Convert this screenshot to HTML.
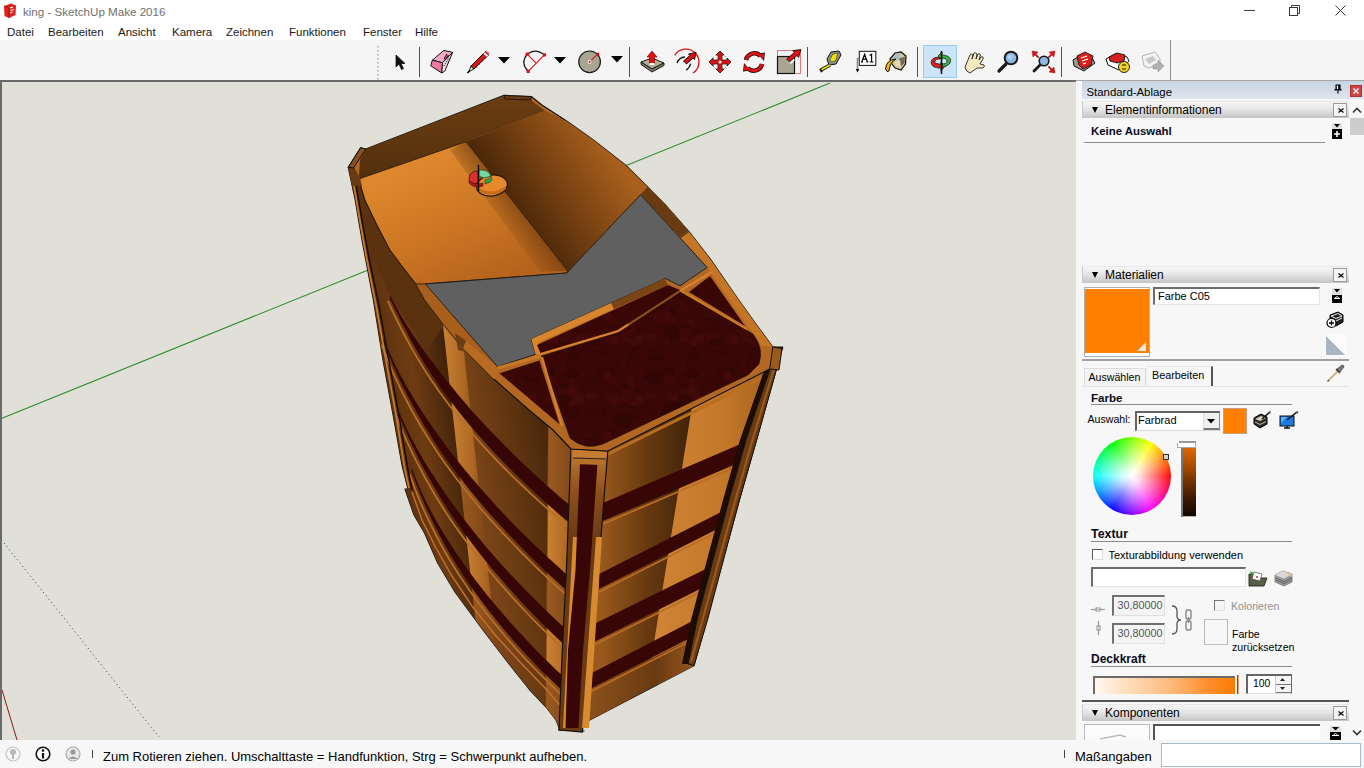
<!DOCTYPE html>
<html><head><meta charset="utf-8">
<style>
*{box-sizing:border-box;margin:0;padding:0}
html,body{width:1364px;height:768px;overflow:hidden;background:#fff;font-family:"Liberation Sans",sans-serif;color:#000}
.a{position:absolute}
.t{position:absolute;white-space:nowrap;line-height:1}
svg{position:absolute;overflow:visible}
#title{left:0;top:0;width:1364px;height:22px;background:#fff}
#menu{left:0;top:22px;width:1364px;height:18px;background:#fff}
#menu .t{top:5px;font-size:11.5px;color:#1a1a1a}
#tb{left:0;top:40px;width:1364px;height:41px;background:#f5f5f5}
#vp{left:0;top:80px;width:1076px;height:660px;background:#e0e0d9;overflow:hidden}
#panel{left:1076px;top:80px;width:288px;height:660px;background:#f7f7f7}
#status{left:0;top:740px;width:1364px;height:28px;background:#f7f7f7}
.hdr{position:absolute;left:6px;width:267px;height:17px;background:linear-gradient(#f6f6f6 0%,#e6e6e6 45%,#c4c4c4 100%);border-top:1px solid #e8e8e8;border-left:1px solid #c8c8c8}
.hdr .tri{position:absolute;left:9px;top:5px;width:0;height:0;border-left:3.5px solid transparent;border-right:3.5px solid transparent;border-top:6px solid #000}
.hdr .lbl{position:absolute;left:22px;top:2px;font-size:12px;color:#000;line-height:1;white-space:nowrap}
.hdr .x{position:absolute;left:250px;top:1px;width:14px;height:14px;border:1px solid #999;background:#f4f4f4}
.sec{position:absolute;font-weight:bold;font-size:12px;color:#0a0a1e;line-height:1;white-space:nowrap}
.ul{position:absolute;height:1px;background:#8c8c8c}
.inp{position:absolute;background:#fff;border-top:2px solid #6c6c6c;border-left:2px solid #6c6c6c;border-right:1px solid #e4e4e4;border-bottom:1px solid #e4e4e4}
.sep{position:absolute;width:1px;background:#505050}
</style></head><body>
<div id="vp" class="a">
<svg width="1076" height="660" viewBox="0 80 1076 660" style="left:0;top:0">
<defs>
<linearGradient id="gFloor" x1="440" y1="150" x2="500" y2="285" gradientUnits="userSpaceOnUse">
 <stop offset="0" stop-color="#de882e"/><stop offset="0.5" stop-color="#cc7624"/><stop offset="1" stop-color="#b4621c"/></linearGradient>
<linearGradient id="gFloorSh" x1="517" y1="206" x2="495" y2="224" gradientUnits="userSpaceOnUse">
 <stop offset="0" stop-color="#5a300c" stop-opacity="0.55"/><stop offset="1" stop-color="#5a300c" stop-opacity="0"/></linearGradient>
<linearGradient id="gRWall" x1="520" y1="210" x2="610" y2="150" gradientUnits="userSpaceOnUse">
 <stop offset="0" stop-color="#4e2a0a"/><stop offset="0.45" stop-color="#7a4212"/><stop offset="1" stop-color="#a8601c"/></linearGradient>
<linearGradient id="gBack" x1="0" y1="100" x2="0" y2="180" gradientUnits="userSpaceOnUse">
 <stop offset="0" stop-color="#6a3c12"/><stop offset="1" stop-color="#52300c"/></linearGradient>
<linearGradient id="gFA" x1="320" y1="0" x2="387.4" y2="0" gradientUnits="userSpaceOnUse" gradientTransform="skewX(9.43)">
 <stop offset="0" stop-color="#5a3010"/><stop offset="0.45" stop-color="#6e3c12"/><stop offset="1" stop-color="#40220a"/></linearGradient>
<linearGradient id="gFB" x1="387.4" y1="0" x2="487.4" y2="0" gradientUnits="userSpaceOnUse" gradientTransform="skewX(9.43)">
 <stop offset="0" stop-color="#80481a"/><stop offset="0.5" stop-color="#623610"/><stop offset="1" stop-color="#40230a"/></linearGradient>
<linearGradient id="gLP" x1="0" y1="0" x2="1" y2="0">
 <stop offset="0" stop-color="#c88032"/><stop offset="0.7" stop-color="#b06a24"/><stop offset="1" stop-color="#985820"/></linearGradient>
<linearGradient id="gLP2" x1="0" y1="0" x2="1" y2="0">
 <stop offset="0" stop-color="#9a5a22"/><stop offset="1" stop-color="#804816"/></linearGradient>
<linearGradient id="gFC" x1="546" y1="0" x2="572" y2="0" gradientUnits="userSpaceOnUse">
 <stop offset="0" stop-color="#cc8234"/><stop offset="1" stop-color="#a8621e"/></linearGradient>
<linearGradient id="gRA" x1="600" y1="0" x2="690" y2="0" gradientUnits="userSpaceOnUse">
 <stop offset="0" stop-color="#9a5a1e"/><stop offset="0.5" stop-color="#6a3a10"/><stop offset="1" stop-color="#42240a"/></linearGradient>
<linearGradient id="gRA2" x1="590" y1="0" x2="700" y2="0" gradientUnits="userSpaceOnUse"><stop offset="0" stop-color="#8a501a"/><stop offset="0.6" stop-color="#6a3a12"/><stop offset="1" stop-color="#9a5a1e"/></linearGradient>
<linearGradient id="gRB" x1="650" y1="0" x2="770" y2="0" gradientUnits="userSpaceOnUse">
 <stop offset="0" stop-color="#d08636"/><stop offset="0.6" stop-color="#c4782a"/><stop offset="1" stop-color="#a8621e"/></linearGradient>
<linearGradient id="gPost" x1="0" y1="450" x2="0" y2="540" gradientUnits="userSpaceOnUse"><stop offset="0" stop-color="#c07830"/><stop offset="0.5" stop-color="#8a4e1a"/><stop offset="1" stop-color="#6a3a12"/></linearGradient>
<pattern id="mar2" width="120" height="120" patternUnits="userSpaceOnUse"><ellipse cx="54" cy="67" rx="12" ry="6" fill="#2a0404" opacity="0.45"/><ellipse cx="22" cy="61" rx="10" ry="8" fill="#2a0404" opacity="0.45"/><ellipse cx="54" cy="17" rx="10" ry="8" fill="#2a0404" opacity="0.45"/><ellipse cx="71" cy="48" rx="9" ry="8" fill="#2a0404" opacity="0.45"/><ellipse cx="75" cy="100" rx="6" ry="4" fill="#2a0404" opacity="0.45"/><ellipse cx="72" cy="93" rx="8" ry="7" fill="#2a0404" opacity="0.45"/><ellipse cx="62" cy="77" rx="9" ry="7" fill="#480c0c" opacity="0.45"/><ellipse cx="79" cy="49" rx="10" ry="9" fill="#2a0404" opacity="0.45"/><ellipse cx="85" cy="38" rx="8" ry="5" fill="#2a0404" opacity="0.45"/><ellipse cx="68" cy="13" rx="7" ry="5" fill="#2a0404" opacity="0.45"/><ellipse cx="115" cy="102" rx="6" ry="5" fill="#2a0404" opacity="0.45"/><ellipse cx="56" cy="118" rx="9" ry="4" fill="#2a0404" opacity="0.45"/><ellipse cx="93" cy="32" rx="7" ry="6" fill="#480c0c" opacity="0.45"/><ellipse cx="91" cy="14" rx="8" ry="5" fill="#2a0404" opacity="0.45"/></pattern>
<pattern id="mar" width="60" height="60" patternUnits="userSpaceOnUse"><rect width="60" height="60" fill="#3a0707"/><rect x="19" y="9" width="9" height="3" fill="#420909" opacity="0.7"/><rect x="22" y="3" width="8" height="3" fill="#330606" opacity="0.7"/><rect x="25" y="14" width="8" height="3" fill="#420909" opacity="0.7"/><rect x="57" y="38" width="9" height="3" fill="#330606" opacity="0.7"/><rect x="3" y="13" width="8" height="4" fill="#330606" opacity="0.7"/><rect x="9" y="7" width="6" height="8" fill="#300505" opacity="0.7"/><rect x="6" y="34" width="6" height="4" fill="#420909" opacity="0.7"/><rect x="34" y="37" width="8" height="6" fill="#450a0a" opacity="0.7"/><rect x="28" y="55" width="7" height="4" fill="#300505" opacity="0.7"/><rect x="42" y="15" width="9" height="6" fill="#450a0a" opacity="0.7"/><rect x="44" y="17" width="12" height="4" fill="#330606" opacity="0.7"/><rect x="10" y="21" width="11" height="6" fill="#420909" opacity="0.7"/><rect x="46" y="34" width="11" height="5" fill="#450a0a" opacity="0.7"/><rect x="36" y="35" width="8" height="8" fill="#450a0a" opacity="0.7"/><rect x="28" y="40" width="4" height="7" fill="#330606" opacity="0.7"/><rect x="17" y="23" width="9" height="3" fill="#330606" opacity="0.7"/><rect x="21" y="37" width="8" height="4" fill="#450a0a" opacity="0.7"/><rect x="8" y="15" width="7" height="8" fill="#420909" opacity="0.7"/><rect x="10" y="24" width="6" height="4" fill="#330606" opacity="0.7"/><rect x="52" y="17" width="7" height="5" fill="#330606" opacity="0.7"/><rect x="57" y="9" width="5" height="4" fill="#300505" opacity="0.7"/><rect x="1" y="50" width="5" height="5" fill="#300505" opacity="0.7"/><rect x="25" y="22" width="9" height="9" fill="#420909" opacity="0.7"/><rect x="27" y="52" width="12" height="7" fill="#330606" opacity="0.7"/><rect x="24" y="24" width="8" height="5" fill="#300505" opacity="0.7"/><rect x="4" y="13" width="5" height="5" fill="#420909" opacity="0.7"/><rect x="6" y="34" width="8" height="9" fill="#420909" opacity="0.7"/><rect x="4" y="12" width="7" height="7" fill="#450a0a" opacity="0.7"/><rect x="36" y="28" width="5" height="6" fill="#330606" opacity="0.7"/><rect x="29" y="19" width="5" height="7" fill="#450a0a" opacity="0.7"/><rect x="29" y="42" width="8" height="4" fill="#450a0a" opacity="0.7"/><rect x="9" y="33" width="4" height="6" fill="#420909" opacity="0.7"/><rect x="42" y="16" width="7" height="4" fill="#300505" opacity="0.7"/><rect x="32" y="47" width="7" height="4" fill="#300505" opacity="0.7"/><rect x="48" y="49" width="10" height="4" fill="#330606" opacity="0.7"/><rect x="21" y="2" width="4" height="5" fill="#450a0a" opacity="0.7"/><rect x="12" y="36" width="7" height="8" fill="#450a0a" opacity="0.7"/><rect x="57" y="22" width="6" height="4" fill="#300505" opacity="0.7"/><rect x="20" y="29" width="12" height="7" fill="#420909" opacity="0.7"/><rect x="29" y="39" width="10" height="4" fill="#420909" opacity="0.7"/></pattern>
</defs>
<path d="M2 418.3 L830 83" stroke="#2e8a2e" stroke-width="1.1"/>
<path d="M2 690 L17 740" stroke="#8a1818" stroke-width="1"/>
<path d="M4 543 L159 737" stroke="#333" stroke-width="1" stroke-dasharray="1 3.2"/>
<polygon points="348.3,167.3 355.2,200.0 362.0,240.0 373.4,300.0 383.0,360.0 394.0,420.0 402.0,465.0 408.0,489.0 405.0,489.0 414.0,515.0 424.6,533.0 437.7,563.0 455.0,592.0 483.0,630.0 506.0,660.0 529.0,689.0 546.0,707.0 556.0,720.0 560.0,730.0 584.0,731.0 559.0,730.0 562.3,650.0 566.4,570.0 571.0,449.0 571.0,449.0 553.0,430.0 529.0,410.0 493.8,379.0 463.0,348.0 444.0,325.0 425.0,300.0 416.0,284.0 405.0,270.0 390.0,250.0 377.0,225.0 365.0,200.0 358.7,179.0" fill="#6a3a10" stroke="#111" stroke-width="1.2" stroke-linejoin="round"/>
<clipPath id="cLF"><polygon points="348.3,167.3 355.2,200.0 362.0,240.0 373.4,300.0 383.0,360.0 394.0,420.0 402.0,465.0 408.0,489.0 405.0,489.0 414.0,515.0 424.6,533.0 437.7,563.0 455.0,592.0 483.0,630.0 506.0,660.0 529.0,689.0 546.0,707.0 556.0,720.0 560.0,730.0 584.0,731.0 559.0,730.0 562.3,650.0 566.4,570.0 571.0,449.0 571.0,449.0 553.0,430.0 529.0,410.0 493.8,379.0 463.0,348.0 444.0,325.0 425.0,300.0 416.0,284.0 405.0,270.0 390.0,250.0 377.0,225.0 365.0,200.0 358.7,179.0"/></clipPath>
<g clip-path="url(#cLF)">
<polygon points="340.0,160.0 423.7,160.0 443.7,331.0 497.0,660.0 497.0,740.0 340.0,740.0" fill="url(#gFA)" />
<polygon points="443.7,331.0 443.7,150.0 548.0,150.0 548.0,438.0 545.4,725.0 545.4,740.0 497.0,660.0" fill="url(#gFB)" />
<polygon points="548.0,438.0 548.0,150.0 600.0,150.0 600.0,740.0 545.4,740.0 545.4,725.0" fill="#8a4e18" />
<polygon points="356.0,180.0 358.7,179.0 365.0,200.0 377.0,225.0 388.5,250.0 403.0,270.0 416.0,284.0 425.0,300.0 444.0,325.0 427.0,350.0 404.8,319.0 388.7,294.0 375.0,262.0 362.0,225.0" fill="#5a3210" />
<polygon points="442.9,323.5 463.6,348.6 471.3,418.5 450.5,393.2" fill="url(#gLP)" />
<polygon points="450.5,393.2 471.3,418.5 479.7,494.7 458.9,469.3" fill="url(#gLP)" />
<polygon points="458.9,469.3 479.7,494.7 486.2,554.3 465.3,527.8" fill="url(#gLP2)" />
<polygon points="465.3,527.8 486.2,554.3 492.2,608.1 471.1,580.5" fill="url(#gLP)" />
<polygon points="471.1,580.5 492.2,608.1 496.5,647.6 475.4,619.7" fill="url(#gLP2)" />
<polygon points="549.0,426.7 572.8,450.9 572.1,516.3 548.3,495.8" fill="url(#gLP2)" />
<polygon points="548.3,495.8 572.1,516.3 571.4,586.7 547.6,565.1" fill="url(#gFC)" />
<polygon points="547.6,565.1 571.4,586.7 570.8,642.4 547.1,619.8" fill="url(#gLP2)" />
<polygon points="547.1,619.8 570.8,642.4 570.3,691.0 546.6,668.0" fill="url(#gFC)" />
<polygon points="546.6,668.0 570.3,691.0 569.7,754.2 546.2,707.2" fill="url(#gLP2)" />
<polyline points="387.8,301.0 389.2,303.9 391.0,307.9 393.2,312.6 395.7,317.6 398.1,322.6 400.5,327.3 402.8,331.8 405.2,336.2 407.6,340.7 410.0,345.2 412.5,349.6 415.1,354.1 417.7,358.6 420.4,363.0 423.1,367.4 425.9,371.9 428.8,376.3 431.7,380.8 434.7,385.1 437.7,389.4 440.8,393.7 443.9,398.0 447.1,402.3 450.4,406.6 453.7,410.8 457.0,415.0 460.4,419.2 463.9,423.5 467.4,427.7 471.0,431.9 474.6,436.1 478.3,440.3 482.1,444.6 485.9,448.8 489.8,453.0 493.7,457.2 497.7,461.3 501.7,465.4 505.8,469.5 509.9,473.7 514.1,477.8 518.4,481.9 522.7,486.0 527.1,490.2 531.5,494.3 536.0,498.4 540.5,502.6 545.1,506.7 550.1,511.1 555.6,515.9 561.1,520.7 566.3,525.1 570.7,528.8 573.8,531.5" fill="none" stroke="#b86e26" stroke-width="1.8" />
<polyline points="381.4,344.5 382.7,347.7 384.4,352.0 386.4,357.0 388.7,362.5 391.0,367.9 393.2,373.0 395.4,377.8 397.6,382.7 400.0,387.5 402.3,392.3 404.8,397.2 407.3,402.0 409.9,406.8 412.5,411.7 415.2,416.5 418.0,421.3 420.8,426.2 423.7,431.0 426.7,435.8 429.7,440.5 432.8,445.2 435.9,450.0 439.1,454.8 442.4,459.5 445.7,464.2 449.1,468.8 452.6,473.5 456.1,478.2 459.7,482.8 463.4,487.5 467.1,492.2 470.9,496.8 474.8,501.5 478.7,506.2 482.7,510.8 486.7,515.5 490.8,520.1 495.0,524.7 499.2,529.2 503.5,533.8 507.9,538.4 512.3,543.0 516.8,547.7 521.3,552.3 526.0,557.0 530.7,561.7 535.4,566.3 540.2,571.0 545.4,575.9 551.2,581.2 557.0,586.5 562.4,591.4 567.0,595.5 570.3,598.5" fill="none" stroke="#b86e26" stroke-width="1.8" />
<polyline points="396.3,416.5 397.5,419.4 399.2,423.4 401.1,428.1 403.3,433.2 405.5,438.2 407.6,442.9 409.7,447.4 411.8,451.8 414.0,456.3 416.2,460.8 418.5,465.2 420.8,469.7 423.2,474.2 425.6,478.7 428.1,483.1 430.7,487.6 433.3,492.1 435.9,496.6 438.6,501.0 441.4,505.4 444.2,509.8 447.0,514.2 449.9,518.6 452.9,523.0 455.9,527.3 459.0,531.6 462.1,535.9 465.3,540.2 468.5,544.5 471.8,548.8 475.1,553.1 478.5,557.4 482.0,561.7 485.4,566.1 489.0,570.4 492.6,574.7 496.3,579.0 500.0,583.3 503.8,587.7 507.6,592.0 511.5,596.3 515.4,600.6 519.4,604.9 523.4,609.2 527.5,613.5 531.6,617.8 535.8,622.1 540.0,626.4 544.6,630.9 549.7,635.8 554.8,640.7 559.6,645.2 563.7,649.0 566.6,651.8" fill="none" stroke="#b86e26" stroke-width="1.8" />
<polyline points="409.8,474.5 410.8,477.3 412.2,481.1 413.8,485.5 415.6,490.3 417.5,495.1 419.3,499.6 421.1,503.8 422.9,508.0 424.8,512.2 426.8,516.3 428.8,520.5 430.8,524.7 432.9,529.0 435.0,533.2 437.2,537.5 439.5,541.8 441.7,546.0 444.1,550.3 446.5,554.5 449.0,558.7 451.5,562.8 454.1,567.0 456.7,571.2 459.4,575.4 462.1,579.5 464.9,583.6 467.7,587.8 470.6,591.9 473.5,596.0 476.5,600.1 479.5,604.2 482.7,608.3 485.8,612.4 489.0,616.5 492.3,620.6 495.6,624.7 499.0,628.8 502.4,632.9 505.8,637.0 509.3,641.1 512.9,645.2 516.5,649.3 520.2,653.3 523.9,657.3 527.7,661.3 531.6,665.4 535.5,669.4 539.4,673.4 543.7,677.7 548.4,682.3 553.2,687.0 557.7,691.3 561.5,694.9 564.2,697.5" fill="none" stroke="#b86e26" stroke-width="1.8" />
<polygon points="389.8,295.0 391.2,297.4 393.0,300.9 395.2,305.1 397.7,309.6 400.1,314.1 402.5,318.3 404.8,322.1 407.2,325.9 409.6,329.7 412.0,333.5 414.5,337.3 417.1,341.1 419.7,344.9 422.4,348.7 425.1,352.4 427.9,356.2 430.8,360.0 433.7,363.8 436.7,367.8 439.7,371.7 442.8,375.7 445.9,379.7 449.1,383.6 452.4,387.6 455.7,391.7 459.0,395.7 462.4,399.8 465.9,403.8 469.4,407.9 473.0,411.9 476.6,416.0 480.3,420.0 484.1,424.1 487.9,428.1 491.8,432.2 495.7,436.2 499.7,440.3 503.7,444.4 507.8,448.5 511.9,452.7 516.1,456.8 520.4,460.9 524.7,465.0 529.1,469.2 533.5,473.3 538.0,477.4 542.5,481.6 547.1,485.7 552.1,490.1 557.6,494.9 563.1,499.7 568.3,504.1 572.7,507.8 575.8,510.5 575.8,528.5 572.7,525.8 568.3,522.1 563.1,517.7 557.6,512.9 552.1,508.1 547.1,503.7 542.5,499.6 538.0,495.4 533.5,491.3 529.1,487.2 524.7,483.0 520.4,478.9 516.1,474.8 511.9,470.7 507.8,466.5 503.7,462.4 499.7,458.3 495.7,454.2 491.8,450.0 487.9,445.8 484.1,441.6 480.3,437.3 476.6,433.1 473.0,428.9 469.4,424.7 465.9,420.5 462.4,416.2 459.0,412.0 455.7,407.8 452.4,403.6 449.1,399.3 445.9,395.0 442.8,390.7 439.7,386.4 436.7,382.1 433.7,377.8 430.8,373.3 427.9,368.9 425.1,364.4 422.4,360.0 419.7,355.6 417.1,351.1 414.5,346.6 412.0,342.2 409.6,337.7 407.2,333.2 404.8,328.8 402.5,324.3 400.1,319.6 397.7,314.6 395.2,309.6 393.0,304.9 391.2,300.9 389.8,298.0" fill="#360606" />
<polygon points="383.4,338.5 384.7,341.3 386.4,345.3 388.4,350.0 390.7,355.1 393.0,360.3 395.2,365.0 397.4,369.3 399.6,373.7 402.0,378.0 404.3,382.3 406.8,386.7 409.3,391.0 411.9,395.3 414.5,399.7 417.2,404.0 420.0,408.3 422.8,412.7 425.7,417.0 428.7,421.4 431.7,425.8 434.8,430.2 437.9,434.7 441.1,439.1 444.4,443.5 447.7,448.0 451.1,452.5 454.6,457.0 458.1,461.5 461.7,466.0 465.4,470.5 469.1,475.0 472.9,479.5 476.8,484.0 480.7,488.5 484.7,493.0 488.7,497.5 492.8,502.1 497.0,506.7 501.2,511.2 505.5,515.8 509.9,520.4 514.3,525.0 518.8,529.5 523.3,534.0 528.0,538.5 532.7,543.0 537.4,547.5 542.2,552.0 547.4,556.9 553.2,562.2 559.0,567.5 564.4,572.4 569.0,576.5 572.3,579.5 572.3,595.5 569.0,592.5 564.4,588.4 559.0,583.5 553.2,578.2 547.4,572.9 542.2,568.0 537.4,563.3 532.7,558.7 528.0,554.0 523.3,549.3 518.8,544.7 514.3,540.0 509.9,535.4 505.5,530.8 501.2,526.2 497.0,521.7 492.8,517.1 488.7,512.5 484.7,507.8 480.7,503.2 476.8,498.5 472.9,493.8 469.1,489.2 465.4,484.5 461.7,479.8 458.1,475.2 454.6,470.5 451.1,465.8 447.7,461.2 444.4,456.5 441.1,451.8 437.9,447.0 434.8,442.2 431.7,437.5 428.7,432.8 425.7,428.0 422.8,423.2 420.0,418.3 417.2,413.5 414.5,408.7 411.9,403.8 409.3,399.0 406.8,394.2 404.3,389.3 402.0,384.5 399.6,379.7 397.4,374.8 395.2,370.0 393.0,364.9 390.7,359.5 388.4,354.0 386.4,349.0 384.7,344.7 383.4,341.5" fill="#360606" />
<polygon points="398.3,410.5 399.5,413.1 401.2,416.8 403.1,421.1 405.3,425.8 407.5,430.5 409.6,434.9 411.7,438.9 413.8,442.8 416.0,446.8 418.2,450.8 420.5,454.7 422.8,458.7 425.2,462.7 427.6,466.7 430.1,470.6 432.7,474.6 435.3,478.6 437.9,482.6 440.6,486.7 443.4,490.7 446.2,494.8 449.0,498.9 451.9,502.9 454.9,507.0 457.9,511.1 461.0,515.3 464.1,519.4 467.3,523.5 470.5,527.7 473.8,531.8 477.1,535.9 480.5,540.1 484.0,544.2 487.4,548.4 491.0,552.5 494.6,556.7 498.3,560.9 502.0,565.0 505.8,569.2 509.6,573.3 513.5,577.5 517.4,581.6 521.4,585.7 525.4,589.9 529.5,594.0 533.6,598.1 537.8,602.3 542.0,606.4 546.6,610.9 551.7,615.8 556.8,620.7 561.6,625.2 565.7,629.0 568.6,631.8 568.6,648.8 565.7,646.0 561.6,642.2 556.8,637.7 551.7,632.8 546.6,627.9 542.0,623.4 537.8,619.1 533.6,614.8 529.5,610.5 525.4,606.2 521.4,601.9 517.4,597.6 513.5,593.3 509.6,589.0 505.8,584.7 502.0,580.3 498.3,576.0 494.6,571.7 491.0,567.4 487.4,563.1 484.0,558.7 480.5,554.4 477.1,550.1 473.8,545.8 470.5,541.5 467.3,537.2 464.1,532.9 461.0,528.6 457.9,524.3 454.9,520.0 451.9,515.6 449.0,511.2 446.2,506.8 443.4,502.4 440.6,498.0 437.9,493.6 435.3,489.1 432.7,484.6 430.1,480.1 427.6,475.7 425.2,471.2 422.8,466.7 420.5,462.2 418.2,457.8 416.0,453.3 413.8,448.8 411.7,444.4 409.6,439.9 407.5,435.2 405.3,430.2 403.1,425.1 401.2,420.4 399.5,416.4 398.3,413.5" fill="#360606" />
<polygon points="411.8,468.5 412.8,471.0 414.2,474.4 415.8,478.5 417.6,483.0 419.5,487.5 421.3,491.6 423.1,495.4 424.9,499.3 426.8,503.2 428.8,507.0 430.8,510.9 432.8,514.7 434.9,518.5 437.0,522.2 439.2,526.0 441.5,529.8 443.7,533.5 446.1,537.3 448.5,541.1 451.0,545.0 453.5,548.8 456.1,552.7 458.7,556.5 461.4,560.4 464.1,564.3 466.9,568.3 469.7,572.2 472.6,576.2 475.5,580.2 478.5,584.1 481.5,588.0 484.7,592.0 487.8,595.9 491.0,599.8 494.3,603.8 497.6,607.7 501.0,611.6 504.4,615.6 507.8,619.5 511.3,623.4 514.9,627.4 518.5,631.3 522.2,635.3 525.9,639.3 529.7,643.3 533.6,647.4 537.5,651.4 541.4,655.4 545.7,659.7 550.4,664.3 555.2,669.0 559.7,673.3 563.5,676.9 566.2,679.5 566.2,694.5 563.5,691.9 559.7,688.3 555.2,684.0 550.4,679.3 545.7,674.7 541.4,670.4 537.5,666.4 533.6,662.4 529.7,658.3 525.9,654.3 522.2,650.3 518.5,646.3 514.9,642.2 511.3,638.1 507.8,634.0 504.4,629.9 501.0,625.8 497.6,621.7 494.3,617.6 491.0,613.5 487.8,609.4 484.7,605.3 481.5,601.2 478.5,597.1 475.5,593.0 472.6,588.9 469.7,584.8 466.9,580.6 464.1,576.5 461.4,572.4 458.7,568.2 456.1,564.0 453.5,559.8 451.0,555.7 448.5,551.5 446.1,547.3 443.7,543.0 441.5,538.8 439.2,534.5 437.0,530.2 434.9,526.0 432.8,521.7 430.8,517.5 428.8,513.3 426.8,509.2 424.9,505.0 423.1,500.8 421.3,496.6 419.5,492.1 417.6,487.3 415.8,482.5 414.2,478.1 412.8,474.3 411.8,471.5" fill="#360606" />
<polyline points="353.0,180.0 359.0,215.0 366.0,255.0 376.0,305.0 385.0,355.0 396.0,415.0 405.0,470.0 409.0,488.0" fill="none" stroke="#c47a2c" stroke-width="1.8" />
<polyline points="356.0,185.0 362.0,220.0 369.0,258.0 379.0,306.0 388.0,356.0 399.0,416.0 408.0,470.0 412.0,490.0" fill="none" stroke="#140a02" stroke-width="1.4" />
<polyline points="412.0,492.0 422.0,520.0 436.0,548.0 452.0,576.0 472.0,606.0 496.0,636.0 520.0,662.0 545.0,688.0 566.0,712.0" fill="none" stroke="#c07028" stroke-width="1.5" />
</g>
<clipPath id="cRF"><polygon points="600.0,446.0 769.7,362.0 782.7,347.0 739.4,500.0 694.0,665.6 583.0,723.4 590.0,450.0"/></clipPath>
<polygon points="600.0,446.0 769.7,362.0 782.7,347.0 739.4,500.0 694.0,665.6 583.0,723.4 590.0,450.0" fill="#6a3a10" stroke="#111" stroke-width="1.2"/>
<g clip-path="url(#cRF)">
<polygon points="590.0,440.0 693.0,400.0 648.0,680.0 590.0,740.0" fill="url(#gRA)" />
<polygon points="693.0,400.0 800.0,340.0 800.0,740.0 648.0,680.0" fill="url(#gRB)" />
<polygon points="580.0,694.0 720.0,624.0 720.0,740.0 580.0,740.0" fill="url(#gRA2)" />
<polygon points="603.0,503.0 750.0,440.0 750.0,458.0 603.0,521.0" fill="#380606" />
<polyline points="603.0,524.0 750.0,461.0" fill="none" stroke="#b86e26" stroke-width="1.8" />
<polygon points="599.0,574.0 735.0,505.0 735.0,520.0 599.0,589.0" fill="#380606" />
<polyline points="599.0,592.0 735.0,523.0" fill="none" stroke="#b86e26" stroke-width="1.8" />
<polygon points="592.0,625.0 720.0,562.0 720.0,579.0 592.0,643.0" fill="#380606" />
<polyline points="592.0,646.0 720.0,582.0" fill="none" stroke="#b86e26" stroke-width="1.8" />
<polygon points="588.0,675.0 706.0,614.0 706.0,630.0 588.0,690.0" fill="#380606" />
<polyline points="588.0,693.0 706.0,633.0" fill="none" stroke="#b86e26" stroke-width="1.8" />
<polyline points="600.0,458.0 770.0,374.0" fill="none" stroke="#b8701e" stroke-width="3" />
</g>
<polygon points="770.0,369.0 746.0,440.0 729.0,500.0 697.0,620.0 688.0,664.0 682.0,664.0 691.0,620.0 723.0,500.0 740.0,440.0 764.0,371.0" fill="#1e0c04" />
<polygon points="772.8,347.0 782.7,347.0 756.7,440.0 739.4,500.0 707.5,620.0 694.0,665.6 688.0,664.0 697.0,620.0 729.0,500.0 746.0,440.0 770.0,369.0" fill="#6a3a12" stroke="#111" stroke-width="1"/>
<polyline points="776.0,362.0 751.0,445.0 734.0,505.0 702.0,622.0 691.0,662.0" fill="none" stroke="#9a5a1c" stroke-width="2.2" />
<polygon points="571.0,449.0 607.8,451.0 598.3,570.0 589.7,650.0 582.4,732.0 559.0,730.0 562.3,650.0 566.4,570.0" fill="url(#gPost)" stroke="#111" stroke-width="1.2"/>
<polygon points="573.0,537.0 579.0,537.0 571.0,728.0 563.0,728.0" fill="#d88a30" />
<polygon points="596.0,537.0 602.0,537.0 589.0,728.0 582.0,728.0" fill="#d88a30" />
<polygon points="580.0,463.0 597.4,464.6 590.0,570.0 583.0,650.0 578.4,728.0 565.5,728.0 568.0,650.0 575.5,570.0" fill="#380606" />
<polygon points="571.5,450.0 607.0,452.0 606.0,458.0 572.5,457.5" fill="#c47c30" />
<polyline points="573.0,458.0 605.6,459.0" fill="none" stroke="#222" stroke-width="1" />
<polygon points="573.0,459.0 605.0,460.0 604.0,465.0 573.0,464.0" fill="#b87028" />
<polygon points="348.3,167.3 360.6,147.8 365.8,149.1 504.0,95.4 531.6,96.7 541.9,105.0 567.4,121.5 593.0,139.7 625.7,165.2 647.6,187.0 665.8,205.3 691.3,234.5 709.6,258.2 738.7,300.0 757.0,325.6 772.8,347.0 782.0,348.4 769.7,369.0 607.8,451.0 571.0,449.0 553.0,430.0 529.0,410.0 493.8,379.0 463.0,348.0 444.0,325.0 425.0,300.0 416.0,284.0 405.0,270.0 390.0,250.0 377.0,225.0 365.0,200.0 358.7,179.0 353.5,168.0" fill="#b26822" stroke="#111" stroke-width="1.2" stroke-linejoin="round"/>
<polygon points="358.7,179.0 360.0,160.0 365.8,149.1 504.0,95.4 531.6,96.7 532.0,101.0 545.0,110.7 466.0,141.8" fill="url(#gBack)" />
<polygon points="466.0,141.8 545.0,110.7 567.4,121.5 593.0,139.7 625.7,165.2 647.6,187.0 652.0,192.0 640.5,194.6 566.8,273.0 567.5,270.7" fill="url(#gRWall)" />
<polygon points="416.0,284.0 425.0,300.0 444.0,325.0 463.0,348.0 493.8,379.0 499.4,373.3 497.5,366.7 424.3,283.9" fill="#a85e1c" />
<polygon points="455.0,333.0 466.0,341.0 466.0,352.0 458.0,350.0" fill="#6e3c12" />
<polygon points="463.0,348.0 493.8,379.0 499.4,373.3 497.5,366.7 466.0,341.0" fill="#b86c22" />
<polygon points="358.7,179.0 466.0,141.8 567.5,270.7 566.8,273.0 424.3,283.9 416.0,284.0 405.0,270.0 390.0,250.0 377.0,225.0 365.0,200.0" fill="url(#gFloor)" stroke="#2a1606" stroke-width="0.9"/>
<polygon points="466.0,141.8 567.5,270.7 540.0,272.0 450.0,150.0" fill="url(#gFloorSh)" />
<polygon points="640.5,194.6 647.6,187.0 665.8,205.3 691.3,234.5 709.6,258.2 738.7,300.0 757.0,325.6 772.8,347.0 761.0,346.0 746.0,324.0 726.0,295.0 710.0,272.0 707.2,267.5" fill="#c47626" />
<polygon points="640.5,194.6 647.6,187.0 665.8,205.3 689.0,232.0 681.0,238.0" fill="#6a3a10" />
<polygon points="640.5,194.6 707.2,267.5 680.0,285.8 665.3,278.5 531.3,339.1 535.5,354.3 497.5,366.7 425.3,284.0 566.8,273.0" fill="#606060" stroke="#1a1a1a" stroke-width="0.9"/>
<path d="M541.3 356 L618 332.5 L628.3 326 L680.5 292 L753 334 Q 764 348 759 364 L748 375 L603 444 Q 585 451 570 438 Z" fill="url(#mar)" stroke="#1a0c04" stroke-width="0.6"/>
<path d="M541.3 356 L618 332.5 L628.3 326 L680.5 292 L753 334 Q 764 348 759 364 L748 375 L603 444 Q 585 451 570 438 Z" fill="url(#mar2)"/>
<polygon points="499.4,373.3 539.5,360.5 559.5,424.3" fill="url(#mar)" />
<polygon points="710.0,276.0 745.0,326.0 689.0,292.0" fill="url(#mar)" />
<polygon points="531.3,339.1 611.0,303.0 614.0,309.0 538.0,343.0 542.0,355.0 535.5,354.3" fill="#d8862e" />
<polygon points="611.0,303.0 664.5,278.4 668.0,285.0 614.0,309.0" fill="#7a4414" />
<polygon points="537.0,345.0 668.0,285.0 680.5,290.2 628.3,324.0 618.0,330.7 540.6,353.5" fill="url(#mar)" />
<polyline points="540.6,354.0 618.0,331.0 628.3,324.5" fill="none" stroke="#d48030" stroke-width="2.2" />
<polyline points="628.3,324.5 680.5,290.5" fill="none" stroke="#8a5018" stroke-width="2" />
<polyline points="680.5,290.5 747.0,329.0" fill="none" stroke="#c87828" stroke-width="2.2" />
<polyline points="680.5,290.5 712.0,272.0" fill="none" stroke="#d48030" stroke-width="2.4" />
<polyline points="542.0,357.0 562.0,426.0" fill="none" stroke="#d48030" stroke-width="2.2" />
<polyline points="497.5,368.0 541.0,356.0" fill="none" stroke="#c87828" stroke-width="3" />
<polygon points="348.3,167.3 353.5,166.0 360.0,178.0 362.0,186.0 352.0,186.0" fill="#6a3a12" />
<polygon points="348.3,167.3 360.6,147.8 365.8,149.1 353.5,168.0" fill="#8a5020" stroke="#111" stroke-width="1"/>
<polygon points="504.0,95.4 531.6,96.7 530.0,100.0 505.0,99.0" fill="#6a3a10" stroke="#111" stroke-width="0.8"/>
<polygon points="772.8,347.0 782.0,348.4 779.0,370.0 769.7,369.0" fill="#9a5a1a" stroke="#111" stroke-width="1"/>
<ellipse cx="492" cy="185.5" rx="15.5" ry="10.5" transform="rotate(-8 492 185.5)" fill="#e48a2c" stroke="#2a1406" stroke-width="1.3"/>
<path d="M478 189 Q 492 199 507 187" stroke="#2a1406" fill="none" stroke-width="1"/>
<path d="M479 188 Q 492 196 506 186 L 506 189 Q 492 199 479 191 Z" fill="#c86a1c"/>
<path d="M469 178 Q 470 171 478 171 L 478 183 Q 471 185 469 180 Z" fill="#d83030" stroke="#3a0a0a" stroke-width="0.7"/>
<path d="M469 180 Q 474 186 483 183 L 483 186 Q 474 189 469 183 Z" fill="#b01818" stroke="#3a0a0a" stroke-width="0.5"/>
<path d="M479 170 Q 488 169 491 176 L 484 178 L 479 176 Z" fill="#70d8a0" stroke="#0a3a1a" stroke-width="0.6"/>
<path d="M485 180 Q 490 179 491 176 L 492 180 Q 490 183 485 184 Z" fill="#30a050" stroke="#0a3a1a" stroke-width="0.5"/>
<path d="M478.5 165 V 191.5" stroke="#111" stroke-width="1.4"/>
</svg>
</div>
<div id="title" class="a">
  <svg style="left:3px;top:3px" width="14" height="16" viewBox="0 0 14 16"><path d="M1 3 L8 0.5 L13 2.5 L12.5 12 L6 15 L1.5 13 Z" fill="#e0201a"/><path d="M1 3 L6 5 L6 15" fill="none" stroke="#9a1010" stroke-width="0.8"/><path d="M7 5 L10 4 M7.5 7.5 L11 6.5 M7 10 L9.5 9" stroke="#fff" stroke-width="1.1"/></svg>
  <div class="t" style="left:23px;top:6px;font-size:11.6px;color:#707070">king - SketchUp Make 2016</div>
  <svg style="left:1244px;top:10px" width="11" height="1"><rect width="11" height="1" fill="#3a3a3a"/></svg>
  <svg style="left:1289px;top:5px" width="11" height="11" viewBox="0 0 11 11"><rect x="0.5" y="2.5" width="8" height="8" fill="none" stroke="#3a3a3a"/><path d="M2.5 2.5 V0.5 H10.5 V8.5 H8.5" fill="none" stroke="#3a3a3a"/></svg>
  <svg style="left:1335px;top:5px" width="11" height="11" viewBox="0 0 11 11"><path d="M0.5 0.5 L10.5 10.5 M10.5 0.5 L0.5 10.5" stroke="#3a3a3a" stroke-width="1"/></svg>
</div>
<div id="menu" class="a">
  <div class="t" style="left:7px">Datei</div>
  <div class="t" style="left:48px">Bearbeiten</div>
  <div class="t" style="left:118px">Ansicht</div>
  <div class="t" style="left:172px">Kamera</div>
  <div class="t" style="left:226px">Zeichnen</div>
  <div class="t" style="left:289px">Funktionen</div>
  <div class="t" style="left:363px">Fenster</div>
  <div class="t" style="left:415px">Hilfe</div>
</div>
<div id="tb" class="a">
  <!-- grip -->
  <svg style="left:377px;top:6px" width="2" height="34"><path d="M1 0 V34" stroke="#9a9a9a" stroke-width="1.2" stroke-dasharray="1.5 2.5"/></svg>
  <!-- select -->
  <svg style="left:395px;top:14px" width="11" height="17" viewBox="0 0 11 17"><path d="M1 1 L1 13 L4 10 L6.5 15.5 L8.5 14.5 L6 9.5 L10 9.5 Z" fill="#111" stroke="#111" stroke-width="0.8" stroke-linejoin="round"/></svg>
  <div class="sep" style="left:419px;top:7px;height:30px"></div>
  <!-- eraser -->
  <svg style="left:430px;top:10px" width="24" height="24" viewBox="0 0 24 24"><path d="M2.3 10.2 L13.8 0.5 L22.7 2.3 L12.5 12.8 Z" fill="#f5a8c8" stroke="#111" stroke-width="1"/><path d="M0.7 15.8 L2.3 10.2 L12.5 12.8 L11.8 23 Z" fill="#f27aa2" stroke="#111" stroke-width="1"/><path d="M12.5 12.8 L22.7 2.3 L14.8 21.1 L11.8 23 Z" fill="#fbe0ea" stroke="#111" stroke-width="1"/><path d="M14 9 L17 4 M15 10 L18.5 5" stroke="#3a1a2a" stroke-width="1.2"/><path d="M14 16 L19 8" stroke="#222" stroke-width="1.3" stroke-dasharray="1 1.2"/></svg>
  <!-- pencil -->
  <svg style="left:467px;top:10px" width="24" height="24" viewBox="0 0 24 24"><path d="M18.5 1.5 L22 4.5 L7 19 L3.8 16.2 Z" fill="#d81818" stroke="#111" stroke-width="1"/><path d="M17 3 L20.5 6.2" stroke="#fff" stroke-width="1.8"/><path d="M19.3 1.2 L22.3 4" stroke="#f08080" stroke-width="1.6"/><path d="M3.8 16.2 L7 19 L2 21.5 Z" fill="#f0e0a0" stroke="#111" stroke-width="0.9"/><path d="M0.5 23 L2.8 20.6" stroke="#000" stroke-width="1.6"/><path d="M9 17 L10 18 M12 14 L13 15 M15 11 L16 12 M18 8 L19 9" stroke="#555" stroke-width="0.6"/></svg>
  <svg style="left:498px;top:17px" width="12" height="7"><path d="M0 0 H12 L6 6.5 Z" fill="#000"/></svg>
  <!-- arc -->
  <svg style="left:522px;top:10px" width="25" height="24" viewBox="0 0 25 24"><path d="M5.2 4.2 Q 13.5 -2.5 22.4 4.9" fill="none" stroke="#111" stroke-width="1.2"/><path d="M5.2 4.2 Q -2 13 6.2 21.4" fill="none" stroke="#111" stroke-width="1.2"/><path d="M22.4 4.9 L6.2 21.4 M5.2 4.2 L13.8 12.8" stroke="#e01010" stroke-width="1.1"/><rect x="3.6" y="2.6" width="3.2" height="3.2" fill="#e01010"/><rect x="20.8" y="3.3" width="3.2" height="3.2" fill="#e01010"/><rect x="4.6" y="19.8" width="3.2" height="3.2" fill="#e01010"/></svg>
  <svg style="left:554px;top:17px" width="12" height="7"><path d="M0 0 H12 L6 6.5 Z" fill="#000"/></svg>
  <!-- circle -->
  <svg style="left:578px;top:10px" width="24" height="24" viewBox="0 0 24 24"><circle cx="11.6" cy="11.8" r="10.8" fill="#a8a690" stroke="#1a1a1a" stroke-width="1.2"/><path d="M11.6 11.8 L20 3.9" stroke="#e01010" stroke-width="1.1"/><circle cx="11.6" cy="11.8" r="2" fill="#fff"/><circle cx="11.6" cy="11.8" r="1.1" fill="#e01010"/><rect x="18.8" y="2.7" width="2.5" height="2.5" fill="#e01010"/></svg>
  <svg style="left:611px;top:16px" width="12" height="7"><path d="M0 0 H12 L6 6.5 Z" fill="#000"/></svg>
  <div class="sep" style="left:629px;top:7px;height:30px"></div>
  <!-- push pull -->
  <svg style="left:640px;top:10px" width="25" height="24" viewBox="0 0 25 24"><path d="M1 12 L12 8 L24 13 L12 19 Z" fill="#b0ae98" stroke="#1a1a1a" stroke-width="1"/><path d="M1 12 L1 14.5 L12 22 L24 15.5 L24 13 L12 19 Z" fill="#7c7a68" stroke="#1a1a1a" stroke-width="1"/><path d="M12 1 L17 7 L14.5 7 L14.5 14 L9.5 14 L9.5 7 L7 7 Z" fill="#e01010" stroke="#600" stroke-width="0.6"/><rect x="9.5" y="13" width="5" height="2" fill="#fff"/></svg>
  <!-- follow me -->
  <svg style="left:674px;top:10px" width="26" height="26" viewBox="0 0 26 26"><path d="M0.8 5.4 A 13 13 0 1 1 19 23" fill="none" stroke="#e01010" stroke-width="1.3"/><path d="M3 13 Q 5 7.5 11 7" fill="none" stroke="#111" stroke-width="1.4"/><path d="M12.3 20.3 Q 16 17 16.7 13.6" fill="none" stroke="#111" stroke-width="1.4"/><path d="M9.5 11 L16 5.5 L14.5 4 L22 2.5 L20.5 9.5 L19 8 L12.5 14 Z" fill="#e01010" stroke="#111" stroke-width="1"/></svg>
  <!-- move -->
  <svg style="left:708px;top:10px" width="24" height="24" viewBox="0 0 24 24"><path d="M12 1 L16 5 L14 5 L14 10 L19 10 L19 8 L23 12 L19 16 L19 14 L14 14 L14 19 L16 19 L12 23 L8 19 L10 19 L10 14 L5 14 L5 16 L1 12 L5 8 L5 10 L10 10 L10 5 L8 5 Z" fill="#e01010" stroke="#222" stroke-width="0.8"/><path d="M12 1 L23 12 L12 23 L1 12 Z" fill="none" stroke="#000" stroke-width="0.6" stroke-dasharray="1 1.5"/><circle cx="12" cy="12" r="1.6" fill="#fff"/></svg>
  <!-- rotate -->
  <svg style="left:742px;top:11px" width="24" height="22" viewBox="0 0 24 22"><g fill="none" stroke="#111" stroke-width="4.6"><path d="M4 9 A 8.5 8.5 0 0 1 18.5 5"/><path d="M20 13 A 8.5 8.5 0 0 1 5.5 17"/></g><path d="M15.5 2.5 L23 1.5 L22 10 Z" fill="#111"/><path d="M8.5 19.5 L1 20.5 L2 12 Z" fill="#111"/><g fill="none" stroke="#e01010" stroke-width="3"><path d="M4 9 A 8.5 8.5 0 0 1 18.5 5"/><path d="M20 13 A 8.5 8.5 0 0 1 5.5 17"/></g><path d="M16.5 3.2 L22.2 2.5 L21.4 8.8 Z" fill="#e01010"/><path d="M7.5 18.8 L1.8 19.5 L2.6 13.2 Z" fill="#e01010"/></svg>
  <!-- scale -->
  <svg style="left:776px;top:9px" width="26" height="26" viewBox="0 0 26 26"><rect x="1.5" y="1.5" width="23" height="23" fill="none" stroke="#e07070" stroke-width="0.9"/><rect x="1.5" y="7.5" width="17" height="17" fill="#a8a690" stroke="#111" stroke-width="1.2"/><path d="M11 12 L16 8 L19 11 L15 15 Z" fill="#fff"/><path d="M10.7 10.0 L18.4 3.5 L16.8 1.6 L24.9 0.6 L22.6 8.4 L21 6.5 L13.3 13.0 Z" fill="#e01010" stroke="#111" stroke-width="0.9" stroke-linejoin="round"/></svg>
  <div class="sep" style="left:807px;top:7px;height:30px"></div>
  <!-- tape -->
  <svg style="left:819px;top:10px" width="23" height="24" viewBox="0 0 23 24"><path d="M8 9 L12 2 L20 1 L22 5 L17 14 L10 15 Z" fill="#909090" stroke="#111" stroke-width="1"/><path d="M11 9 L14 4 L19 3 L16.5 11 L12 12 Z" fill="#f0e000" stroke="#333" stroke-width="0.6"/><path d="M11 15 L2 20" stroke="#111" stroke-width="3.6"/><path d="M11 15 L2 20" stroke="#f0e000" stroke-width="2"/><path d="M1 19 L3 22" stroke="#111" stroke-width="2"/></svg>
  <!-- text -->
  <svg style="left:855px;top:10px" width="23" height="24" viewBox="0 0 23 24"><rect x="4.3" y="1.3" width="16.5" height="14.1" fill="#fff" stroke="#111" stroke-width="1"/><path d="M6.8 12 L9.6 4.2 L12.4 12 M7.9 9.2 H11.3 M6 12 H8 M11.3 12 H13.3" fill="none" stroke="#000" stroke-width="1.2"/><path d="M14.6 5.6 L16.6 4.3 V12 M14.8 12 H18.4" fill="none" stroke="#000" stroke-width="1.2"/><path d="M4.3 8.5 H2.5 V19" fill="none" stroke="#8a8a8a" stroke-width="1.6"/><path d="M0.8 19 H4.2 L2.5 22.5 Z" fill="#000"/></svg>
  <!-- paint -->
  <svg style="left:884px;top:10px" width="25" height="24" viewBox="0 0 25 24"><path d="M6 9 L11 3 L17 2 L22 6 L21.5 14 L17 20 L11 18 L8 14 Z" fill="#cfc8a0" stroke="#111" stroke-width="1.2"/><path d="M8 9 L12 4 L17 3.5 L15 8.5 L10 11 Z" fill="#a8bcc4"/><path d="M15 8.5 L21 6.5 L20.5 13 L16.5 17 Z" fill="#706c5c"/><path d="M11 12 L16 10 L17 17 L12 16 Z" fill="#e4dcb0"/><path d="M1.5 19 Q 2 10 12 9 Q 6 12 5 21 Q 3 23 1.5 19 Z" fill="#f0b400" stroke="#111" stroke-width="1"/></svg>
  <div class="sep" style="left:917px;top:7px;height:30px"></div>
  <!-- orbit highlighted -->
  <div class="a" style="left:923px;top:5px;width:34px;height:33px;background:#cce4f7;border:1px solid #99c9ef"></div>
  <svg style="left:929px;top:10px" width="24" height="25" viewBox="0 0 24 25"><path d="M11 7 C 2 7 1 12 3 15 C 5 18 10 18 12 18 L12 21 L16 16 L12 12 L12 14 C 8 14 5 13 6 11 C 7 9 10 9 11 9 Z" fill="#d02020" stroke="#111" stroke-width="0.7"/><path d="M13 5 C 20 5 23 9 21 13 C 19 16 15 17 13 17 L13 14 C 16 14 18 13 18 11 C 18 9 15 8 13 8 L13 10 L9 6 L13 2 Z" fill="#38b048" stroke="#111" stroke-width="0.7"/><path d="M12.5 1 V24" stroke="#111" stroke-width="1.6"/></svg>
  <!-- hand -->
  <svg style="left:963px;top:10px" width="23" height="24" viewBox="0 0 23 24"><path d="M2 17 L7 5 Q8 3 10 5 L9 9 L11 3 Q13 2 14 4 L13 9 L15 4 Q17 3 17.5 5 L16 10 L18 7 Q20 6 20.5 8 L17 14 L21 15 Q22 17 20 18 L14 18 L7 23 Q3 22 2 17 Z" fill="#f4e8c0" stroke="#222" stroke-width="0.9"/></svg>
  <!-- zoom -->
  <svg style="left:996px;top:10px" width="24" height="24" viewBox="0 0 24 24"><path d="M3 21 L10 14" stroke="#1a1a1a" stroke-width="3.2" stroke-linecap="round"/><circle cx="15" cy="8" r="6.3" fill="#8cb8e4" stroke="#1a1a1a" stroke-width="2"/><circle cx="14" cy="7" r="2.5" fill="#b0d0f0"/></svg>
  <!-- zoom extents -->
  <svg style="left:1031px;top:10px" width="25" height="24" viewBox="0 0 25 24"><path d="M3 21 L10 14" stroke="#1a1a1a" stroke-width="2.8" stroke-linecap="round"/><circle cx="13" cy="11" r="4.8" fill="#8cb8e4" stroke="#1a1a1a" stroke-width="1.6"/><path d="M1 1 L7 2 L5 4 L8 7 L7 8 L4 5 L2 7 Z M24 1 L18 2 L20 4 L17 7 L18 8 L21 5 L23 7 Z M24 23 L18 22 L20 20 L17 17 L18 16 L21 19 L23 17 Z" fill="#e01010" stroke="#700" stroke-width="0.4"/></svg>
  <div class="sep" style="left:1061px;top:7px;height:30px"></div>
  <!-- 3d warehouse -->
  <svg style="left:1072px;top:11px" width="24" height="22" viewBox="0 0 24 22"><path d="M1 9 L9 4 L20 7 L23 12 L12 20 L2 15 Z" fill="#9a9a90" stroke="#111" stroke-width="1"/><path d="M5 5 L13 1 L21 5 L19 14 L11 18 L7 14 Z" fill="#d82020" stroke="#111" stroke-width="0.9"/><path d="M9 7 L15 5 M10 10 L16 8 M11 13 L14 12" stroke="#fff" stroke-width="1.2"/></svg>
  <!-- extension warehouse -->
  <svg style="left:1105px;top:11px" width="26" height="22" viewBox="0 0 26 22"><path d="M1 8 L10 3 L22 6 L24 10 L14 19 L3 14 Z" fill="#fff" stroke="#111" stroke-width="1"/><path d="M4 6 L12 2 L20 4 L19 10 L12 12 L5 10 Z" fill="#d82020" stroke="#111" stroke-width="0.9"/><circle cx="19" cy="16" r="5.5" fill="#f0d020" stroke="#111" stroke-width="0.9"/><path d="M17 14 L21 14 M17 18 L21 18" stroke="#111" stroke-width="1"/></svg>
  <!-- share model (grey) -->
  <svg style="left:1141px;top:11px" width="24" height="22" viewBox="0 0 24 22"><path d="M1 5 L14 1 L19 8 L19 12 L8 17 L3 15 Z" fill="#f4f4f4" stroke="#b4b4b4" stroke-width="1"/><path d="M4 8 L12 5 L15 9 L8 13 Z" fill="#c8c8c8"/><path d="M12 14 L17 12 L17 9 L23 15 L17 21 L17 18 L12 18 Z" fill="#b0b0b0" stroke="#999" stroke-width="0.6"/></svg>
  <div class="sep" style="left:1170px;top:0px;height:40px;background:#8a8a8a"></div>
</div>
<!-- viewport border -->
<div class="a" style="left:0;top:80px;width:1076px;height:2px;background:#6a6a6a"></div>
<div class="a" style="left:0;top:80px;width:2px;height:660px;background:#6a6a6a"></div>
<div id="panel" class="a">
  <div class="a" style="left:0;top:0;width:288px;height:1px;background:#a8a8a8"></div>
  <!-- title bar -->
  <div class="a" style="left:6px;top:1px;width:282px;height:18px;background:linear-gradient(#c8d4e2,#dde6ef)"></div>
  <div class="t" style="left:10.5px;top:7px;font-size:11.4px;color:#000">Standard-Ablage</div>
  <svg style="left:1334px;top:4px;left:258px" width="8" height="10" viewBox="0 0 8 10"><path d="M1.5 0.5 H6.5 V5 H7.5 V6.5 H0.5 V5 H1.5 Z" fill="#000"/><rect x="2.8" y="1.5" width="1.4" height="3.5" fill="#fff"/><path d="M4 6.5 V9.5" stroke="#000" stroke-width="1.2"/></svg>
  <div class="a" style="left:274px;top:5px;width:12px;height:12px;background:#d04444;border:1px solid #b03030"></div>
  <svg style="left:277px;top:8px" width="6" height="6" viewBox="0 0 6 6"><path d="M0.5 0.5 L5.5 5.5 M5.5 0.5 L0.5 5.5" stroke="#fff" stroke-width="1.4"/></svg>
  <!-- scrollbar -->
  <div class="a" style="left:274px;top:19px;width:14px;height:641px;background:#f7f7f7"></div>
  <svg style="left:276px;top:27px" width="10" height="6" viewBox="0 0 10 6"><path d="M1 5.5 L5 1.5 L9 5.5" fill="none" stroke="#333" stroke-width="1.6"/></svg>
  <div class="a" style="left:274px;top:38px;width:14px;height:17px;background:#cdcdcd"></div>
  <svg style="left:276px;top:650px" width="10" height="6" viewBox="0 0 10 6"><path d="M1 0.5 L5 4.5 L9 0.5" fill="none" stroke="#333" stroke-width="1.6"/></svg>
  <!-- Elementinformationen -->
  <div class="hdr" style="top:21px"><div class="tri"></div><div class="lbl">Elementinformationen</div><div class="x"><svg style="left:3.5px;top:4px" width="6" height="5" viewBox="0 0 6 5"><path d="M0.5 0.5 L5.5 4.5 M5.5 0.5 L0.5 4.5" stroke="#000" stroke-width="1.1"/></svg></div></div>
  <div class="sec" style="left:15px;top:46px;font-size:11.4px">Keine Auswahl</div>
  <div class="ul" style="left:8px;top:62px;width:241px;height:1px;background:#8c8c8c"></div>
  <svg style="left:256px;top:43px" width="10" height="16" viewBox="0 0 10 16"><rect x="0" y="0" width="10" height="6" fill="#e0e0e0"/><path d="M2 1 H8 L5 4.5 Z" fill="#000"/><rect x="0" y="6" width="10" height="10" fill="#000"/><path d="M5 8 V14 M2 11 H8" stroke="#fff" stroke-width="1.6"/></svg>
  <!-- Materialien -->
  <div class="hdr" style="top:186px"><div class="tri"></div><div class="lbl">Materialien</div><div class="x"><svg style="left:3.5px;top:4px" width="6" height="5" viewBox="0 0 6 5"><path d="M0.5 0.5 L5.5 4.5 M5.5 0.5 L0.5 4.5" stroke="#000" stroke-width="1.1"/></svg></div></div>
  <div class="a" style="left:8px;top:207px;width:66px;height:70px;background:#fff;border:1px solid #b0b0b0"></div>
  <div class="a" style="left:9px;top:209px;width:64px;height:64px;background:#ff7f00"></div>
  <svg style="left:61px;top:262px" width="9" height="9"><path d="M9 0 L9 9 L0 9 Z" fill="#f0e8e0"/></svg>
  <div class="inp" style="left:77px;top:207px;width:167px;height:18px;border-top:2px solid #6c6c6c;border-left:2px solid #6c6c6c"></div>
  <div class="t" style="left:82px;top:211px;font-size:11px">Farbe C05</div>
  <svg style="left:256px;top:208px" width="10" height="15" viewBox="0 0 10 15"><rect x="0" y="0" width="10" height="7" fill="#e0e0e0"/><path d="M2 1 H8 L5 4.5 Z" fill="#000"/><rect x="0" y="7" width="10" height="8" fill="#000"/><path d="M2 10.5 H8 M5 8.5 L3 10 M5 8.5 L7 10" stroke="#fff" stroke-width="1"/></svg>
  <svg style="left:250px;top:231px" width="18" height="18" viewBox="0 0 18 18"><path d="M4 4 L12 1 L17 4 L17 11 L10 15 L4 12 Z" fill="#222" stroke="#000"/><path d="M5 5 L12 2.5 L16 5 L10 7.5 Z M5 7.5 L10 10 L16 7" fill="none" stroke="#eee" stroke-width="1"/><circle cx="5.5" cy="12" r="4.5" fill="#fff" stroke="#000" stroke-width="1.2"/><path d="M5.5 9.5 V14.5 M3 12 H8" stroke="#000" stroke-width="1.3"/></svg>
  <svg style="left:249px;top:254px" width="22" height="22" viewBox="0 0 22 22"><rect x="0" y="0" width="22" height="22" fill="#fbfbfb"/><path d="M1 21 L1 2 L20 21 Z" fill="#a9b6c2"/></svg>
  <div class="ul" style="left:6px;top:279px;width:267px;height:2px;background:#a0a0a0"></div>
  <!-- tabs -->
  <div class="a" style="left:8px;top:288px;width:62px;height:19px;background:#f4f4f4;border:1px solid #dcdcdc;border-bottom:none"></div>
  <div class="t" style="left:12.5px;top:292px;font-size:10.6px">Auswählen</div>
  <div class="a" style="left:70px;top:286px;width:67px;height:21px;background:#f7f7f7;border-left:1px solid #f0f0f0;border-top:1px solid #e6e6e6;border-right:2px solid #555"></div>
  <div class="t" style="left:76px;top:290px;font-size:10.8px">Bearbeiten</div>
  <div class="ul" style="left:6px;top:306px;width:267px;height:1px;background:#e4e4e4"></div>
  <svg style="left:250px;top:284px" width="19" height="19" viewBox="0 0 19 19"><path d="M2 17 L12 7" stroke="#c8b878" stroke-width="1.8"/><path d="M1.5 17.5 L3 16" stroke="#555" stroke-width="1.2"/><path d="M11 5 L16 1 Q18 1 18 3 L14 8 Z" fill="#777" stroke="#444" stroke-width="0.7"/><path d="M10 5 L14 9" stroke="#333" stroke-width="1.6"/></svg>
  <!-- Farbe -->
  <div class="sec" style="left:15px;top:312px;font-size:11.6px">Farbe</div>
  <div class="ul" style="left:15px;top:324px;width:201px"></div>
  <div class="t" style="left:11.5px;top:334px;font-size:10.6px">Auswahl:</div>
  <div class="a" style="left:59px;top:331px;width:85px;height:20px;background:#fff;border-top:2px solid #646464;border-left:2px solid #646464;border-right:1px solid #888;border-bottom:1px solid #d8d8d8"></div>
  <div class="t" style="left:62px;top:335px;font-size:11px">Farbrad</div>
  <div class="a" style="left:127px;top:333px;width:16px;height:17px;background:#f0f0f0;border-left:1px solid #ddd;border-bottom:2px solid #777"></div>
  <svg style="left:131px;top:339px" width="8" height="5"><path d="M0 0 H8 L4 4.5 Z" fill="#000"/></svg>
  <div class="a" style="left:147px;top:328px;width:24px;height:26px;background:#ff7f00;border:1px solid #c8a080"></div>
  <svg style="left:177px;top:331px" width="19" height="19" viewBox="0 0 19 19"><path d="M1 7 L8 3 L14 6 L14 13 L7 17 L1 13 Z" fill="#2a2a2a" stroke="#000"/><path d="M2 8 L8 5 L13 7 L7 10 Z" fill="#d8d0b0"/><path d="M2 11 L7 13.5 L13 10.5" stroke="#c8c0a0" stroke-width="1" fill="none"/><path d="M9 8 L17 1" stroke="#111" stroke-width="1.6"/><path d="M15 1 L18 0 L17 3 Z" fill="#555"/></svg>
  <svg style="left:203px;top:331px" width="20" height="19" viewBox="0 0 20 19"><rect x="1" y="5" width="14" height="10" fill="#1a7ae0" stroke="#111" stroke-width="1"/><path d="M2 6 L8 6 L2 12 Z" fill="#60b0f0"/><path d="M5 17 H11 M8 15 V17" stroke="#111" stroke-width="1.4"/><path d="M8 9 L18 1" stroke="#111" stroke-width="1.6"/><path d="M16 1 L19.5 0 L18.5 3 Z" fill="#555"/></svg>
  <!-- color wheel -->
  <div class="a" style="left:16.5px;top:356.5px;width:78px;height:78px;border-radius:50%;background:radial-gradient(circle, #fff 0%, rgba(255,255,255,0.85) 15%, rgba(255,255,255,0) 72%), conic-gradient(from 90deg, #ff0000, #ff00ff 60deg, #0000ff 120deg, #00ffff 180deg, #00ff00 240deg, #ffff00 300deg, #ff0000 360deg)"></div>
  <div class="a" style="left:86.5px;top:374px;width:6px;height:6px;border:1px solid #333;background:#d8d0c0"></div>
  <!-- value slider -->
  <div class="a" style="left:104.5px;top:367px;width:16px;height:70px;background:#b8b8b8;border-left:2px solid #777;border-right:1px solid #fff"></div>
  <div class="a" style="left:106.5px;top:368px;width:13px;height:68px;background:linear-gradient(#e06800,#8a3c00 40%,#3a1800 75%,#120800)"></div>
  <div class="a" style="left:103px;top:360.5px;width:17px;height:3px;background:#999"></div>
  <div class="a" style="left:101px;top:363px;width:19px;height:5px;background:#fff;border:1px solid #aaa;border-top:none"></div>
  <!-- Textur -->
  <div class="sec" style="left:15px;top:448px;font-size:12.4px">Textur</div>
  <div class="ul" style="left:15px;top:461px;width:201px"></div>
  <div class="a" style="left:16px;top:469px;width:11px;height:11px;background:#fff;border-top:1px solid #555;border-left:1px solid #555;border-right:1px solid #ddd;border-bottom:1px solid #ddd"></div>
  <div class="t" style="left:32.5px;top:470px;font-size:11px">Texturabbildung verwenden</div>
  <div class="inp" style="left:15px;top:487px;width:155px;height:20px"></div>
  <svg style="left:172px;top:490px" width="20" height="17" viewBox="0 0 20 17"><path d="M1 4 L1 16 L16 16 L19 8 L6 8 L4 4 Z" fill="#5a6048" stroke="#222" stroke-width="0.9"/><path d="M4 9 L6 2 L14 4 L12 11 Z" fill="#fff" stroke="#333" stroke-width="0.6"/><path d="M2 1 L6 3 L4 6 Z" fill="#30a030"/><path d="M8 7 L10 7" stroke="#e02020" stroke-width="1.5"/></svg>
  <svg style="left:198px;top:490px" width="19" height="17" viewBox="0 0 19 17"><path d="M1 5 L9 1 L18 4 L18 12 L10 16 L1 12 Z" fill="#9a9a9a" stroke="#777" stroke-width="0.8"/><path d="M1 5 L10 8.5 L18 4 L9 1 Z" fill="#d8d8d8"/><path d="M10 1.5 L18 4 L18 7 L12 3 Z" fill="#e0c090"/><path d="M2 8 L10 11.5 L18 7.5 M2 10 L10 13.5 L18 9.5" stroke="#555" stroke-width="0.8" fill="none"/></svg>
  <!-- size inputs -->
  <svg style="left:15px;top:526px" width="14" height="7" viewBox="0 0 14 7"><path d="M0 3.5 H14" stroke="#999" stroke-width="1.2"/><rect x="4" y="1" width="6" height="5" rx="2" fill="#aaa"/><path d="M7 0.5 V6.5" stroke="#eee" stroke-width="1"/></svg>
  <div class="a" style="left:35.5px;top:514.5px;width:53px;height:21px;background:#f4f4f4;border-top:2px solid #707070;border-left:2px solid #707070;border-right:1px solid #e0e0e0;border-bottom:1px solid #e0e0e0"></div>
  <div class="t" style="left:41.5px;top:519.5px;font-size:10.8px;color:#555">30,80000</div>
  <svg style="left:19px;top:541px" width="7" height="14" viewBox="0 0 7 14"><path d="M3.5 0 V14" stroke="#999" stroke-width="1.2"/><rect x="1" y="4" width="5" height="6" rx="2" fill="#aaa"/><path d="M0.5 7 H6.5" stroke="#eee" stroke-width="1"/></svg>
  <div class="a" style="left:35.5px;top:542.5px;width:53px;height:21px;background:#f4f4f4;border-top:2px solid #707070;border-left:2px solid #707070;border-right:1px solid #e0e0e0;border-bottom:1px solid #e0e0e0"></div>
  <div class="t" style="left:41.5px;top:547.5px;font-size:10.8px;color:#555">30,80000</div>
  <svg style="left:95px;top:525px" width="11" height="30" viewBox="0 0 11 30"><path d="M1 1 Q 6 1 6 6 L6 11 Q 6 15 10 15 Q 6 15 6 19 L6 24 Q 6 29 1 29" fill="none" stroke="#555" stroke-width="1.3"/></svg>
  <svg style="left:109px;top:529px" width="7" height="22" viewBox="0 0 7 22"><rect x="1" y="1" width="5" height="9" rx="1.5" fill="none" stroke="#888" stroke-width="1.4"/><rect x="1" y="12" width="5" height="9" rx="1.5" fill="none" stroke="#888" stroke-width="1.4"/><path d="M3.5 8 V14" stroke="#888" stroke-width="1.4"/></svg>
  <div class="a" style="left:138px;top:519.5px;width:11px;height:11px;background:#f4f4f4;border-top:1px solid #777;border-left:1px solid #777;border-right:1px solid #e4e4e4;border-bottom:1px solid #e4e4e4"></div>
  <div class="t" style="left:155px;top:521px;font-size:10.6px;color:#909090">Kolorieren</div>
  <div class="a" style="left:128px;top:539px;width:24px;height:26px;background:#f7f7f7;border:1px solid #bcbcbc"></div>
  <div class="t" style="left:156px;top:549px;font-size:10.6px">Farbe</div>
  <div class="t" style="left:156px;top:561.5px;font-size:10.6px">zurücksetzen</div>
  <!-- Deckkraft -->
  <div class="sec" style="left:15px;top:573px;font-size:12px">Deckkraft</div>
  <div class="ul" style="left:15px;top:586px;width:201px"></div>
  <div class="a" style="left:16.5px;top:595.5px;width:142px;height:18px;border-top:2px solid #6a6a6a;border-left:2px solid #6a6a6a;background:linear-gradient(90deg,#fff8f0,#fedcb8 25%,#fdb878 55%,#fd9030 80%,#fc7a00)"></div>
  <div class="a" style="left:161px;top:595px;width:1px;height:19px;background:#555"></div>
  <div class="a" style="left:162px;top:595px;width:1px;height:19px;background:#e8a070"></div>
  <div class="a" style="left:170px;top:594px;width:46px;height:20px;background:#fff;border-top:2px solid #646464;border-left:2px solid #646464;border-right:1px solid #666;border-bottom:1px solid #e0e0e0"></div>
  <div class="t" style="left:177px;top:599px;font-size:10.4px">100</div>
  <div class="a" style="left:199px;top:596px;width:16px;height:17px;background:#f4f4f4;border-left:1px solid #ccc"></div>
  <div class="a" style="left:200px;top:604px;width:15px;height:1px;background:#777"></div>
  <div class="a" style="left:200px;top:612px;width:15px;height:1px;background:#777"></div>
  <svg style="left:204px;top:598px" width="5" height="3"><path d="M0 3 L2.5 0 L5 3 Z" fill="#222"/></svg>
  <svg style="left:204px;top:607px" width="5" height="3"><path d="M0 0 L2.5 3 L5 0 Z" fill="#222"/></svg>
  <!-- Komponenten -->
  <div class="a" style="left:6px;top:620px;width:267px;height:2px;background:#555"></div>
  <div class="hdr" style="top:624px"><div class="tri"></div><div class="lbl">Komponenten</div><div class="x"><svg style="left:3.5px;top:4px" width="6" height="5" viewBox="0 0 6 5"><path d="M0.5 0.5 L5.5 4.5 M5.5 0.5 L0.5 4.5" stroke="#000" stroke-width="1.1"/></svg></div></div>
  <div class="a" style="left:8px;top:644px;width:66px;height:20px;background:#fbfbfb;border:1px solid #bbb"></div>
  <svg style="left:24px;top:653px" width="30" height="7"><path d="M0 6 L20 2 L26 4" stroke="#bbb" stroke-width="1.5" fill="none"/></svg>
  <div class="a" style="left:77px;top:644px;width:167px;height:20px;background:#fff;border-top:2px solid #555;border-left:2px solid #555"></div>
  <svg style="left:254px;top:646px" width="11" height="14" viewBox="0 0 11 14"><rect x="0" y="0" width="11" height="6" fill="#e0e0e0"/><path d="M2 1 H9 L5.5 4.5 Z" fill="#000"/><rect x="0" y="6" width="11" height="8" fill="#000"/><path d="M2 9.5 H9 M5.5 7.5 L3.5 9 M5.5 7.5 L7.5 9" stroke="#fff" stroke-width="1"/></svg>
</div>
<div id="status" class="a">
  <svg style="left:5px;top:6px" width="16" height="16" viewBox="0 0 16 16"><circle cx="8" cy="8" r="7" fill="none" stroke="#c4c4c4" stroke-width="1.2"/><circle cx="8" cy="6" r="3" fill="#b8b8b8"/><path d="M8 8 V13" stroke="#b8b8b8" stroke-width="2"/></svg>
  <svg style="left:35px;top:6px" width="16" height="16" viewBox="0 0 16 16"><circle cx="8" cy="8" r="6.8" fill="#fff" stroke="#111" stroke-width="1.6"/><circle cx="8" cy="4.6" r="1.3" fill="#111"/><path d="M8 7 V12.5" stroke="#111" stroke-width="2.2"/></svg>
  <svg style="left:65px;top:6px" width="16" height="16" viewBox="0 0 16 16"><circle cx="8" cy="8" r="7" fill="#e8e8e8" stroke="#aaa" stroke-width="1.2"/><circle cx="8" cy="6" r="2.6" fill="#999"/><path d="M3.5 13 Q8 8 12.5 13" fill="#999"/></svg>
  <div class="a" style="left:92px;top:10px;width:1px;height:8px;background:#444"></div>
  <div class="t" style="left:103px;top:10px;font-size:13px;color:#000">Zum Rotieren ziehen. Umschalttaste = Handfunktion, Strg = Schwerpunkt aufheben.</div>
  <div class="a" style="left:1064px;top:10px;width:1px;height:8px;background:#444"></div>
  <div class="t" style="left:1075px;top:10px;font-size:13px;color:#000">Maßangaben</div>
  <div class="a" style="left:1161px;top:3px;width:200px;height:24px;background:#fff;border:1px solid #a9bccc"></div>
</div>

</body></html>
